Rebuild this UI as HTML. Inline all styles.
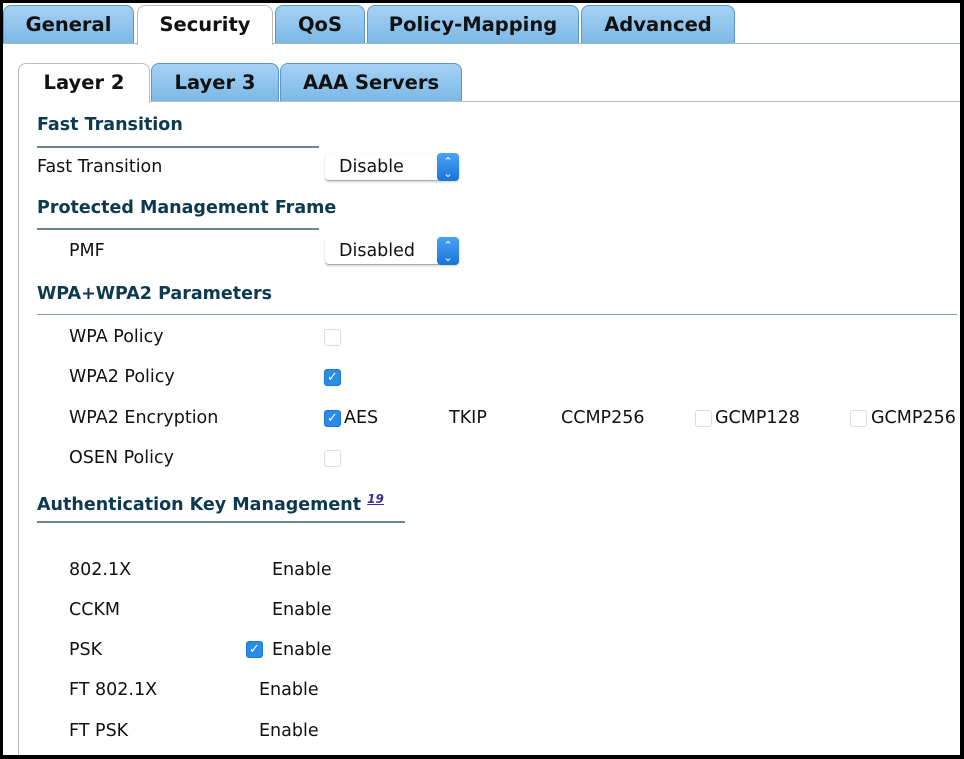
<!DOCTYPE html>
<html><head><style>
body{margin:0;width:964px;height:759px;overflow:hidden;background:#000;font-family:"DejaVu Sans","Liberation Sans",sans-serif;}
#f{position:absolute;left:3px;top:3px;width:957px;height:752px;background:#fff;overflow:hidden;}
.t{position:absolute;height:38px;top:2px;background:linear-gradient(#a5d2f4,#7db8e6);border:1px solid #5a98cc;border-bottom:none;border-radius:8px 8px 0 0;font-weight:bold;font-size:19.5px;color:#111;text-align:center;line-height:38px;box-sizing:border-box;}
.t.a{background:#fff;border-color:#bbb;height:40px;}
.s{top:60px;height:38px;}
.x{position:absolute;font-size:17.5px;color:#111;}
.h{position:absolute;font-size:17.5px;font-weight:bold;color:#0d3a50;}
.l{position:absolute;height:2px;background:#6d8592;}
.cb{position:absolute;width:17px;height:17px;border:1px solid #ddd;border-radius:3px;box-sizing:border-box;background:#fff;}
.cb.c{background:#2a8ce8;border-color:#1f78d0;color:#fff;font-size:13px;line-height:16px;text-align:center;font-weight:bold;}
.sel{position:absolute;width:134px;height:28px;border-bottom:1px solid #aaa;border-radius:4px;box-shadow:0 1px 2px #ccc;font-size:17.5px;line-height:28px;padding-left:14px;box-sizing:border-box;color:#111;}
.sel i{position:absolute;right:0;top:0;width:22px;height:28px;background:linear-gradient(#4aa3f5,#1a73d8);border-radius:4px;color:#fff;font-style:normal;font-size:11px;line-height:12px;text-align:center;padding-top:3px;box-sizing:border-box;}
</style></head><body><div id="f">
<div style="position:absolute;left:0;top:40px;width:957px;height:1px;background:#9bb;"></div>
<div class="t" style="left:0;width:131px">General</div>
<div class="t a" style="left:134px;width:136px">Security</div>
<div class="t" style="left:272px;width:90px">QoS</div>
<div class="t" style="left:364px;width:212px">Policy-Mapping</div>
<div class="t" style="left:578px;width:154px">Advanced</div>
<div style="position:absolute;left:15px;top:98px;width:950px;height:1px;background:#bbb;"></div>
<div style="position:absolute;left:15px;top:98px;width:1px;height:660px;background:#bbb;"></div>
<div class="t a s" style="left:15px;width:132px">Layer 2</div>
<div class="t s" style="left:148px;width:128px">Layer 3</div>
<div class="t s" style="left:277px;width:182px">AAA Servers</div>
<div class="h" style="left:34px;top:112px">Fast Transition</div>
<div class="l" style="left:34px;top:143px;width:282px"></div>
<div class="x" style="left:34px;top:154px">Fast Transition</div>
<div class="sel" style="left:322px;top:150px">Disable<i>⌃<br>⌄</i></div>
<div class="h" style="left:34px;top:195px">Protected Management Frame</div>
<div class="l" style="left:34px;top:225px;width:282px"></div>
<div class="x" style="left:66px;top:238px">PMF</div>
<div class="sel" style="left:322px;top:234px">Disabled<i>⌃<br>⌄</i></div>
<div class="h" style="left:34px;top:281px">WPA+WPA2 Parameters</div>
<div class="l" style="left:34px;top:311px;width:920px;height:1px;background:#8a9aa2"></div>
<div class="x" style="left:66px;top:324px">WPA Policy</div>
<div class="cb" style="left:321px;top:326px"></div>
<div class="x" style="left:66px;top:364px">WPA2 Policy</div>
<div class="cb c" style="left:321px;top:366px">✓</div>
<div class="x" style="left:66px;top:405px">WPA2 Encryption</div>
<div class="cb c" style="left:321px;top:407px">✓</div>
<div class="x" style="left:341px;top:405px">AES</div>
<div class="x" style="left:446px;top:405px">TKIP</div>
<div class="x" style="left:558px;top:405px">CCMP256</div>
<div class="cb" style="left:692px;top:407px"></div>
<div class="x" style="left:712px;top:405px">GCMP128</div>
<div class="cb" style="left:847px;top:407px"></div>
<div class="x" style="left:868px;top:405px">GCMP256</div>
<div class="x" style="left:66px;top:445px">OSEN Policy</div>
<div class="cb" style="left:321px;top:447px"></div>
<div class="h" style="left:34px;top:489px">Authentication Key Management <sup style="color:#3a2e9a;font-size:12px;text-decoration:underline;font-style:italic">19</sup></div>
<div class="l" style="left:34px;top:518px;width:368px"></div>
<div class="x" style="left:66px;top:557px">802.1X</div>
<div class="x" style="left:269px;top:557px">Enable</div>
<div class="x" style="left:66px;top:597px">CCKM</div>
<div class="x" style="left:269px;top:597px">Enable</div>
<div class="x" style="left:66px;top:637px">PSK</div>
<div class="cb c" style="left:243px;top:638px">✓</div>
<div class="x" style="left:269px;top:637px">Enable</div>
<div class="x" style="left:66px;top:677px">FT 802.1X</div>
<div class="x" style="left:256px;top:677px">Enable</div>
<div class="x" style="left:66px;top:718px">FT PSK</div>
<div class="x" style="left:256px;top:718px">Enable</div>
</div></body></html>
